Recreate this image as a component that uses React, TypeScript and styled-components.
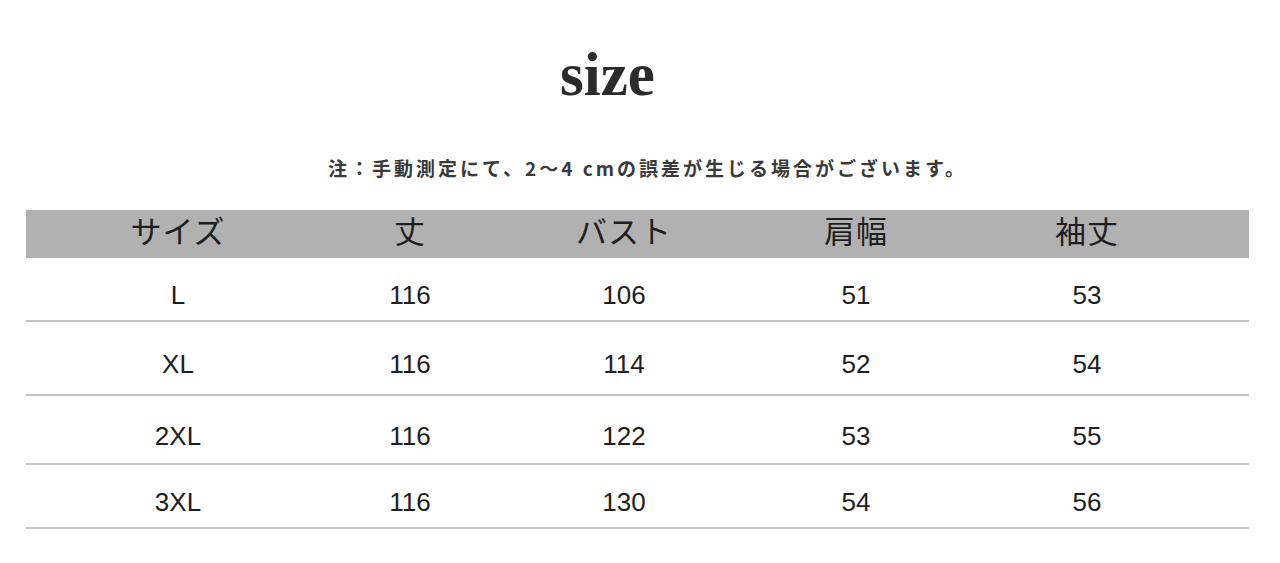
import styled, { createGlobalStyle } from 'styled-components'

const GlobalStyle = createGlobalStyle`
  html, body {
    margin: 0;
    padding: 0;
    background: #ffffff;
  }
`

const HEADERS = ['サイズ', '丈', 'バスト', '肩幅', '袖丈']

// row height includes its 2px bottom rule
const ROWS: Array<{ cells: string[]; height: number }> = [
  { cells: ['L', '116', '106', '51', '53'], height: 64 },
  { cells: ['XL', '116', '114', '52', '54'], height: 74 },
  { cells: ['2XL', '116', '122', '53', '55'], height: 69 },
  { cells: ['3XL', '116', '130', '54', '56'], height: 64 }
]

const COLUMNS = '304px 160px 268px 196px 266px 1fr'

export default function App() {
  return (
    <>
      <GlobalStyle />
      <Page>
        <Title>size</Title>
        <Note>注：手動測定にて、2〜4 cmの誤差が生じる場合がございます。</Note>
        <Table>
          <HeaderRow>
            {HEADERS.map((h) => (
              <HeaderCell key={h}>{h}</HeaderCell>
            ))}
          </HeaderRow>
          {ROWS.map((row) => (
            <BodyRow key={row.cells[0]} $height={row.height}>
              {row.cells.map((c, i) => (
                <BodyCell key={i}>{c}</BodyCell>
              ))}
            </BodyRow>
          ))}
        </Table>
      </Page>
    </>
  )
}

const Page = styled.div`
  width: 1280px;
  height: 563px;
  box-sizing: border-box;
  padding: 44px 31px 0 26px;
  display: flex;
  flex-direction: column;
  align-items: center;
  overflow: hidden;
`

const Title = styled.div`
  font-family: 'Liberation Serif', 'Times New Roman', serif;
  font-weight: 700;
  font-size: 61px;
  line-height: 62px;
  height: 62px;
  color: #2b2b2b;
  margin-right: 60px;
`

const Note = styled.div`
  margin-top: 52px;
  font-family: 'Noto Sans CJK JP', sans-serif;
  font-weight: 700;
  font-size: 19px;
  line-height: 20px;
  letter-spacing: 3px;
  color: #3a3a3a;
  margin-left: 20px;
`

const Table = styled.div`
  margin-top: 32px;
  align-self: stretch;
  display: flex;
  flex-direction: column;
`

const HeaderRow = styled.div`
  display: grid;
  grid-template-columns: ${COLUMNS};
  height: 48px;
  align-items: center;
  background: #b1b1b1;
`

const HeaderCell = styled.div`
  text-align: center;
  font-family: 'Noto Sans CJK JP', sans-serif;
  font-weight: 400;
  font-size: 31px;
  line-height: 40px;
  color: #1f1f1f;
  letter-spacing: 1px;
  margin-top: -8px;
`

const BodyRow = styled.div<{ $height: number }>`
  display: grid;
  grid-template-columns: ${COLUMNS};
  height: ${(p) => p.$height}px;
  box-sizing: border-box;
  padding-top: 12px;
  align-items: center;
  border-bottom: 2px solid #c4c4c4;
`

const BodyCell = styled.div`
  text-align: center;
  font-family: 'Liberation Sans', Arial, sans-serif;
  font-size: 26px;
  line-height: 30px;
  color: #1e1e1e;
`
